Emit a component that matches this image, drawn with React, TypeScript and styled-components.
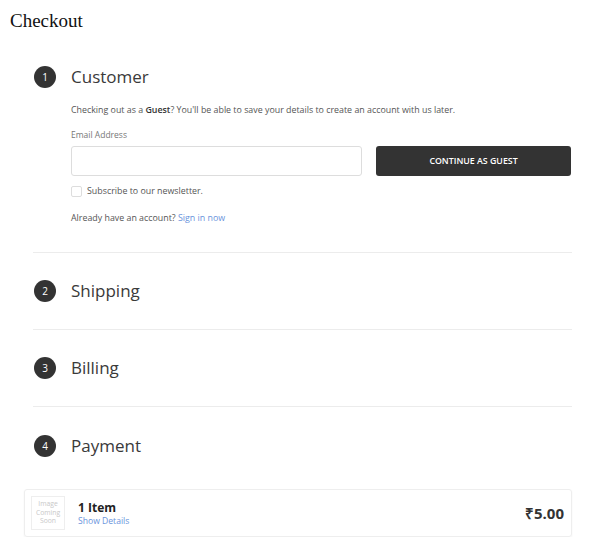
import React from "react";
import styled, { createGlobalStyle } from "styled-components";

const GlobalStyle = createGlobalStyle`
  html, body { margin: 0; padding: 0; background: #fff; }
  body { font-family: "Open Sans", "Liberation Sans", sans-serif; color: #333; }
  * { box-sizing: border-box; }
`;

const Page = styled.div`
  padding: 10px 0 0 10px;
  width: 615px;
`;

const Title = styled.h1`
  margin: 0;
  font-family: "Liberation Serif", serif;
  font-size: 19px;
  font-weight: normal;
  line-height: 22px;
  color: #111;
`;

const Steps = styled.ol`
  list-style: none;
  margin: 34px 0 0 23px;
  padding: 0;
  width: 539px;
`;

const Step = styled.li<{ $first?: boolean; $last?: boolean }>`
  padding: ${(p) => (p.$first ? "0" : p.$last ? "28px" : "27px")} 0 27px 0;
  border-bottom: ${(p) => (p.$last ? "none" : "1px solid #ececec")};
`;

const StepHeader = styled.div`
  display: flex;
  align-items: center;
  gap: 15px;
  height: 22px;
  padding-left: 1px;
`;

const StepNumber = styled.span`
  width: 22px;
  height: 22px;
  border-radius: 50%;
  background: #333;
  color: #fff;
  font-size: 10px;
  display: flex;
  align-items: center;
  justify-content: center;
`;

const StepTitle = styled.h2`
  margin: 0;
  font-size: 17px;
  font-weight: 400;
  color: #3a3a3a;
  line-height: 22px;
`;

const StepBody = styled.div`
  padding-left: 38px;
  padding-top: 16px;
`;

const Text = styled.p<{ $mt?: number }>`
  margin: ${(p) => p.$mt ?? 0}px 0 0;
  font-size: 8.85px;
  line-height: 13px;
  color: #555;
  b { color: #333; font-weight: 600; }
`;

const Link = styled.a`
  color: #6a94dc;
  text-decoration: none;
`;

const Label = styled.label`
  display: block;
  margin-top: 12px;
  font-size: 8.5px;
  line-height: 12px;
  color: #777;
`;

const FormRow = styled.div`
  display: flex;
  align-items: center;
  gap: 14px;
  margin-top: 5px;
`;

const Input = styled.input`
  width: 291px;
  height: 30px;
  border: 1px solid #ddd;
  border-radius: 3px;
  padding: 0 8px;
  font-family: inherit;
`;

const Button = styled.button`
  width: 195px;
  height: 30px;
  background: #333;
  color: #fff;
  border: none;
  border-radius: 3px;
  font-family: "Open Sans", sans-serif;
  font-size: 8.8px;
  font-weight: 600;
  text-transform: uppercase;
  cursor: pointer;
`;

const CheckRow = styled.label`
  display: flex;
  align-items: center;
  gap: 5px;
  margin-top: 10px;
  font-size: 8.85px;
  color: #555;
  line-height: 11px;
`;

const Box = styled.span`
  width: 11px;
  height: 11px;
  border: 1px solid #ddd;
  border-radius: 2px;
  background: #fff;
`;

const Card = styled.div`
  margin: 5px 0 0 14px;
  width: 548px;
  height: 48px;
  border: 1px solid #eee;
  border-radius: 3px;
  box-shadow: 0 1px 2px rgba(0, 0, 0, 0.06);
  display: flex;
  align-items: center;
  padding: 0 7px 0 6px;
  gap: 13px;
`;

const Thumb = styled.div`
  width: 34px;
  height: 34px;
  border: 1px solid #eee;
  display: flex;
  align-items: center;
  justify-content: center;
  text-align: center;
  font-size: 6.8px;
  line-height: 8.5px;
  color: #c8c8c8;
`;

const ItemInfo = styled.div`
  flex: 1;
  display: flex;
  flex-direction: column;
`;

const ItemCount = styled.span`
  font-size: 12px;
  font-weight: 700;
  color: #222;
  line-height: 15px;
`;

const Details = styled.a`
  font-size: 8.6px;
  color: #6a94dc;
  line-height: 12px;
`;

const Price = styled.span`
  font-size: 15px;
  font-weight: 700;
  color: #333;
`;

const steps = ["Shipping", "Billing", "Payment"];

export default function App() {
  return (
    <>
      <GlobalStyle />
      <Page>
        <Title>Checkout</Title>
        <Steps>
          <Step $first>
            <StepHeader>
              <StepNumber>1</StepNumber>
              <StepTitle>Customer</StepTitle>
            </StepHeader>
            <StepBody>
              <Text>
                Checking out as a <b>Guest</b>? You'll be able to save your details to create an account with us later.
              </Text>
              <Label>Email Address</Label>
              <FormRow>
                <Input type="email" />
                <Button>Continue as Guest</Button>
              </FormRow>
              <CheckRow>
                <Box />
                Subscribe to our newsletter.
              </CheckRow>
              <Text $mt={15}>
                Already have an account? <Link href="#">Sign in now</Link>
              </Text>
            </StepBody>
          </Step>
          {steps.map((s, i) => (
            <Step key={s} $last={i === steps.length - 1}>
              <StepHeader>
                <StepNumber>{i + 2}</StepNumber>
                <StepTitle>{s}</StepTitle>
              </StepHeader>
            </Step>
          ))}
        </Steps>
        <Card>
          <Thumb>
            Image
            <br />
            Coming
            <br />
            Soon
          </Thumb>
          <ItemInfo>
            <ItemCount>1 Item</ItemCount>
            <Details>Show Details</Details>
          </ItemInfo>
          <Price>₹5.00</Price>
        </Card>
      </Page>
    </>
  );
}
